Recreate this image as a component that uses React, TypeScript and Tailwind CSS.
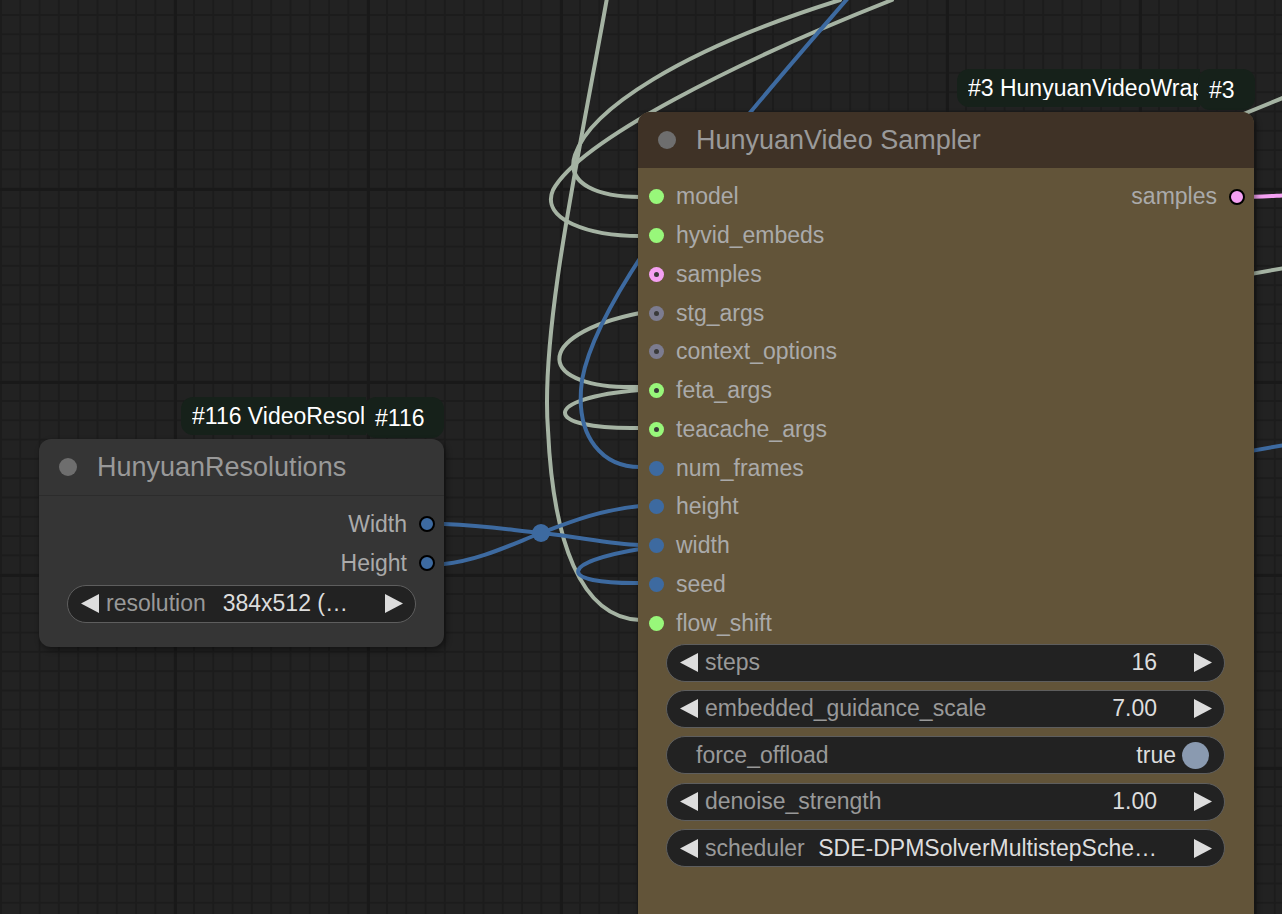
import React from 'react';

type Slot = { name: string; color: string; hollow?: boolean };

const GREEN = '#98f77a';
const PINK = '#f4a0f2';
const BLUE = '#3d6aa0';
const GREY = '#7c7c90';

const samplerInputs: Slot[] = [
  { name: 'model', color: GREEN },
  { name: 'hyvid_embeds', color: GREEN },
  { name: 'samples', color: PINK, hollow: true },
  { name: 'stg_args', color: GREY, hollow: true },
  { name: 'context_options', color: GREY, hollow: true },
  { name: 'feta_args', color: GREEN, hollow: true },
  { name: 'teacache_args', color: GREEN, hollow: true },
  { name: 'num_frames', color: BLUE },
  { name: 'height', color: BLUE },
  { name: 'width', color: BLUE },
  { name: 'seed', color: BLUE },
  { name: 'flow_shift', color: GREEN },
];

const LeftArrow = () => (
  <svg width="20" height="19" viewBox="0 0 20 19" className="shrink-0">
    <polygon points="19,0 19,19 1,9.5" fill="#dddddd" />
  </svg>
);

const RightArrow = () => (
  <svg width="20" height="19" viewBox="0 0 20 19" className="shrink-0">
    <polygon points="1,0 1,19 19,9.5" fill="#dddddd" />
  </svg>
);

const Dot: React.FC<{ color: string; hollow?: boolean; outlined?: boolean }> = ({ color, hollow, outlined }) => (
  <span
    className={
      outlined
        ? 'flex items-center justify-center w-[16px] h-[16px] rounded-full border-2 border-black shrink-0'
        : 'flex items-center justify-center w-[15px] h-[15px] rounded-full shrink-0'
    }
    style={{ backgroundColor: color }}
  >
    {hollow && <span className="w-[5px] h-[5px] rounded-full bg-[#3a3a3a]" />}
  </span>
);

const InputRow: React.FC<{ slot: Slot }> = ({ slot }) => (
  <div className="flex items-center h-[38.75px] pl-[11px] gap-[12px]">
    <Dot color={slot.color} hollow={slot.hollow} />
    <span className="text-[23px] text-[#aaaaaa] leading-none">{slot.name}</span>
  </div>
);

const OutputRow: React.FC<{ name: string; color: string }> = ({ name, color }) => (
  <div className="flex items-center justify-end h-[38.75px] pr-[9px] gap-[12px]">
    <span className="text-[23px] text-[#aaaaaa] leading-none">{name}</span>
    <Dot color={color} outlined />
  </div>
);

const NumberWidget: React.FC<{ label: string; value: string; bright?: boolean }> = ({ label, value }) => (
  <div className="flex items-center h-[38px] rounded-full border border-[#5e5e5e] bg-[#222222] pl-[12px] pr-[11px]">
    <LeftArrow />
    <span className="ml-[6px] text-[23px] text-[#999999] leading-none whitespace-nowrap">{label}</span>
    <span className="ml-auto mr-[36px] text-[23px] text-[#dddddd] leading-none whitespace-nowrap">{value}</span>
    <RightArrow />
  </div>
);

const ToggleWidget: React.FC<{ label: string; value: string }> = ({ label, value }) => (
  <div className="flex items-center h-[38px] rounded-full border border-[#5e5e5e] bg-[#222222] pl-[29px] pr-[15px]">
    <span className="text-[23px] text-[#999999] leading-none">{label}</span>
    <span className="ml-auto text-[23px] text-[#dddddd] leading-none">{value}</span>
    <span className="ml-[6px] w-[27px] h-[27px] rounded-full bg-[#8a9ab0]" />
  </div>
);

const Tag: React.FC<{ title: string; id: string; className: string; titleWidth: string; idWidth: string }> = ({
  title,
  id,
  className,
  titleWidth,
  idWidth,
}) => (
  <div className={`absolute flex ${className}`}>
    <div className="h-[38px] bg-[#16211a] rounded-l-[12px] pl-[11px] flex items-center overflow-hidden">
      <span className={`${titleWidth} overflow-hidden whitespace-nowrap text-[23px] text-white leading-none`}>
        {title}
      </span>
    </div>
    <div className={`${idWidth} h-[41px] bg-[#16211a] rounded-[12px] -ml-[2px] pl-[11px] pt-[10px] text-[23px] text-white leading-none`}>
      {id}
    </div>
  </div>
);

const Canvas = () => (
  <svg className="absolute inset-0" width="1282" height="914">
    <defs>
      <pattern id="minor" x="0" y="14" width="19.3" height="19.3" patternUnits="userSpaceOnUse">
        <rect x="0" y="0" width="19.3" height="19.3" fill="#222222" />
        <rect x="0" y="0" width="2" height="19.3" fill="#1c1c1c" />
        <rect x="0" y="0" width="19.3" height="2" fill="#1c1c1c" />
      </pattern>
      <pattern id="major" x="174" y="188" width="193" height="193" patternUnits="userSpaceOnUse">
        <rect x="0" y="0" width="3" height="193" fill="#191919" />
        <rect x="0" y="0" width="193" height="3" fill="#191919" />
      </pattern>
    </defs>
    <rect width="1282" height="914" fill="url(#minor)" />
    <rect width="1282" height="914" fill="url(#major)" />

    <g fill="none" strokeWidth="4" strokeLinecap="round">
      {/* links on the grey side */}
      <path d="M 607 -2 C 580 150, 540 330, 548 430 C 553 540, 580 618, 640 620" stroke="#a5b3a3" />
      <path d="M 840 0 C 680 50, 590 110, 575 155 C 565 185, 600 197, 640 197" stroke="#a5b3a3" />
      <path d="M 892 0 C 740 60, 580 140, 553 190 C 540 220, 590 236, 640 236" stroke="#a5b3a3" />
      <path d="M 640 313 C 530 335, 535 390, 640 387" stroke="#a5b3a3" />
      <path d="M 640 390 C 540 398, 540 430, 640 428" stroke="#a5b3a3" />
      <path d="M 1180 140 L 1290 95" stroke="#a5b3a3" />
      <path d="M 1200 283 L 1290 267" stroke="#a5b3a3" />

      {/* int links */}
      <path d="M 848 -2 C 760 100, 600 280, 582 380 C 574 440, 605 467, 640 467" stroke={BLUE} />
      <path d="M 444 524 C 490 526, 510 530, 541 533 C 580 537, 610 544, 640 545" stroke={BLUE} />
      <path d="M 444 564 C 480 560, 510 545, 541 533 C 570 522, 600 510, 640 506" stroke={BLUE} />
      <path d="M 640 549 C 560 562, 555 584, 640 583" stroke={BLUE} />
      <path d="M 1200 460 L 1290 444" stroke={BLUE} />

      {/* latent out */}
      <path d="M 1237 197 C 1260 197, 1270 196, 1290 195" stroke={PINK} />
    </g>
    <circle cx="541" cy="533" r="9" fill={BLUE} />
  </svg>
);

const App: React.FC = () => {
  return (
    <div className="relative w-[1282px] h-[914px] overflow-hidden bg-[#222222] font-['Liberation_Sans',Arial,sans-serif]">
      <Canvas />

      {/* #116 resolution node */}
      <Tag
        title="#116 VideoResolutions"
        id="#116"
        className="left-[181px] top-[397px]"
        titleWidth="w-[174px]"
        idWidth="w-[80px]"
      />
      <div className="absolute left-[39px] top-[439px] w-[405px] h-[208px] rounded-[12px] bg-[#353535] shadow-[2px_3px_6px_rgba(0,0,0,0.45)] flex flex-col">
        <div className="h-[57px] flex items-center pl-[20px] gap-[20px] border-b border-[#2c2c2c]">
          <span className="w-[18px] h-[18px] rounded-full bg-[#6e6e6e]" />
          <span className="text-[27px] text-[#999999] leading-none">HunyuanResolutions</span>
        </div>
        <div className="flex flex-col pt-[9px]">
          <OutputRow name="Width" color={BLUE} />
          <OutputRow name="Height" color={BLUE} />
          <div className="px-[28px] pt-[2px]">
            <NumberWidget label="resolution" value="384x512 (…" />
          </div>
        </div>
      </div>

      {/* #3 sampler node */}
      <Tag
        title="#3 HunyuanVideoWrapper"
        id="#3"
        className="left-[957px] top-[69px]"
        titleWidth="w-[232px]"
        idWidth="w-[57px]"
      />
      <div className="absolute left-[638px] top-[112px] w-[616px] h-[830px] rounded-[12px] bg-[#625439] shadow-[2px_3px_6px_rgba(0,0,0,0.45)] flex flex-col overflow-hidden">
        <div className="h-[56px] bg-[#3f3226] flex items-center pl-[20px] gap-[20px]">
          <span className="w-[18px] h-[18px] rounded-full bg-[#6e6e6e]" />
          <span className="text-[27px] text-[#9a9a9a] leading-none">HunyuanVideo Sampler</span>
        </div>
        <div className="relative pt-[9.6px]">
          <div className="absolute right-0 top-[9.6px] w-[200px]">
            <OutputRow name="samples" color={PINK} />
          </div>
          {samplerInputs.map((s) => (
            <InputRow key={s.name} slot={s} />
          ))}
          <div className="flex flex-col gap-[8.4px] pl-[28px] pr-[29px] pt-[1px]">
            <NumberWidget label="steps" value="16" />
            <NumberWidget label="embedded_guidance_scale" value="7.00" />
            <ToggleWidget label="force_offload" value="true" />
            <NumberWidget label="denoise_strength" value="1.00" />
            <NumberWidget label="scheduler" value="SDE-DPMSolverMultistepSche…" />
          </div>
        </div>
      </div>
    </div>
  );
};

export default App;
